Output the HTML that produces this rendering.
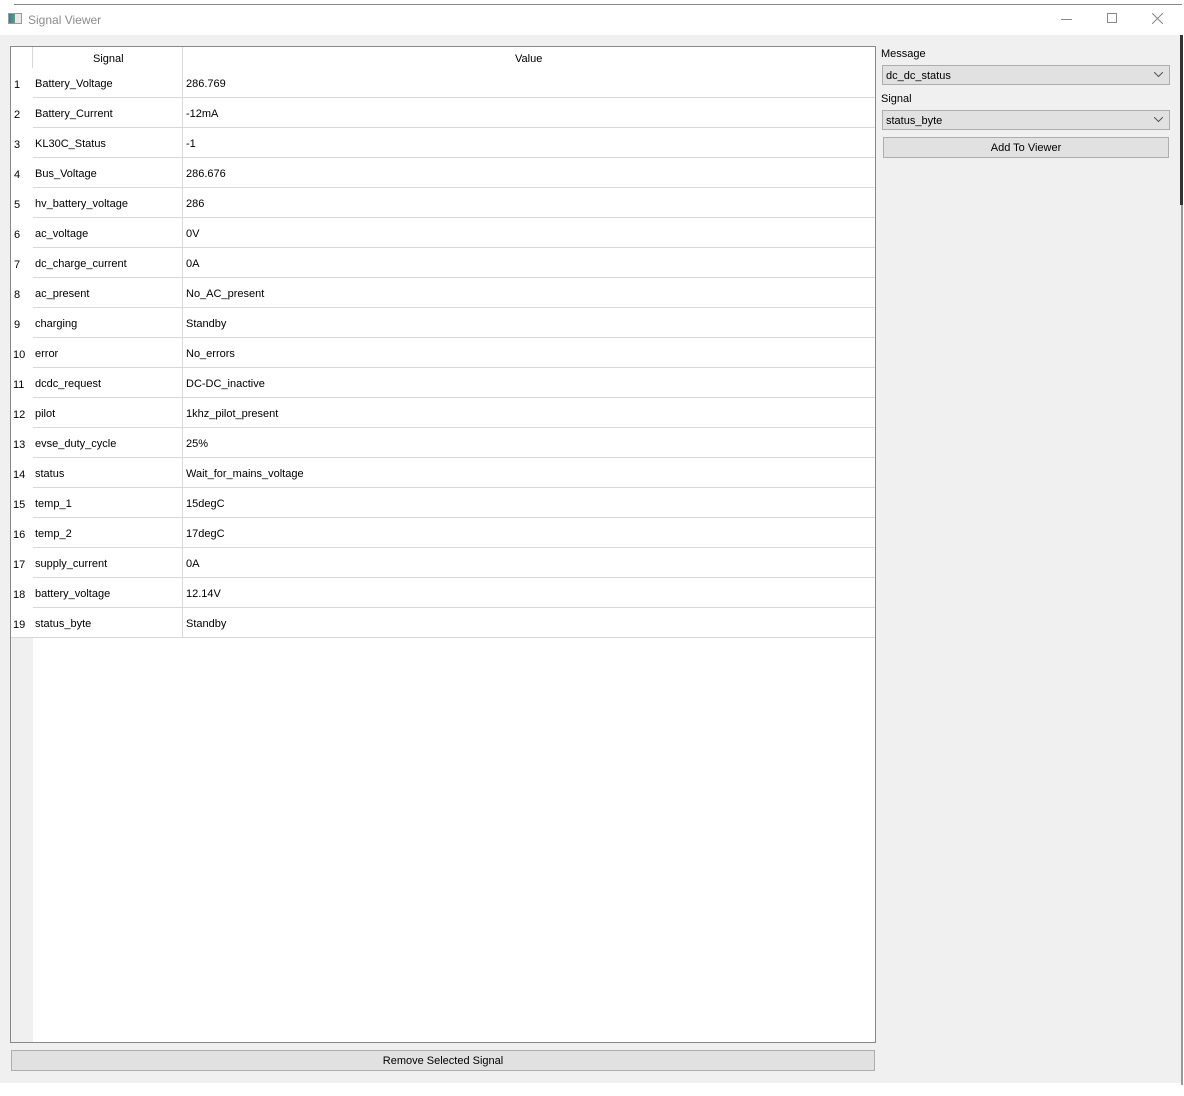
<!DOCTYPE html>
<html><head><meta charset="utf-8"><style>
*{margin:0;padding:0;box-sizing:border-box}
body{width:1184px;height:1096px;background:#fff;position:relative;overflow:hidden;font-family:"Liberation Sans",sans-serif;font-size:11px;color:#000}
.a{position:absolute}
.row{position:absolute;left:33px;width:842px;height:30px;border-bottom:1px solid #d8d8d8}
.row span{position:absolute;top:10px}
.num{position:absolute;left:14px;font-size:11px;margin-top:1px}
.combo{position:absolute;left:882px;width:288px;height:20px;background:#e1e1e1;border:1px solid #adadad;padding:4px 0 0 3px}
.combo svg{position:absolute;right:6px;top:6px}
.btn{position:absolute;background:#e1e1e1;border:1px solid #adadad;text-align:center;padding-top:4px}
</style></head><body>
<div class="a" style="left:14px;top:4px;width:1168px;height:1px;background:#8a8a8a"></div>
<div class="a" style="left:0;top:5px;width:1182px;height:30px;background:#fff"></div>
<div class="a" style="left:8px;top:13px;width:14px;height:11px;border:1px solid #9a9a9a;background:linear-gradient(90deg,#3d7a9a 0,#5aa080 50%,#e8e8e8 50%)"></div>
<div class="a" style="left:28px;top:13px;font-size:12px;color:#8c8c8c">Signal Viewer</div>
<div class="a" style="left:1061px;top:19px;width:11px;height:1px;background:#888"></div>
<div class="a" style="left:1107px;top:13px;width:10px;height:10px;border:1px solid #888"></div>
<svg class="a" style="left:1152px;top:13px" width="11" height="11"><path d="M0 0L11 11M11 0L0 11" stroke="#888" stroke-width="1"/></svg>
<div class="a" style="left:0;top:35px;width:1182px;height:1048px;background:#f0f0f0"></div>
<div class="a" style="left:1180px;top:35px;width:3px;height:170px;background:#333"></div>
<div class="a" style="left:1181px;top:205px;width:2px;height:880px;background:#999"></div>
<div class="a" style="left:10px;top:46px;width:866px;height:997px;border:1px solid #888;background:#fff"></div>
<div class="a" style="left:11px;top:637px;width:22px;height:405px;background:#f0f0f0"></div>
<div class="a" style="left:32px;top:47px;width:1px;height:21px;background:#d8d8d8"></div>
<div class="a" style="left:182px;top:47px;width:1px;height:590px;background:#d8d8d8"></div>
<div class="a" style="left:93px;top:53px">Signal</div>
<div class="a" style="left:515px;top:53px">Value</div>
<div class="row" style="top:68px"><span style="left:2px">Battery_Voltage</span><span style="left:153px">286.769</span></div>
<div class="row" style="top:98px"><span style="left:2px">Battery_Current</span><span style="left:153px">-12mA</span></div>
<div class="row" style="top:128px"><span style="left:2px">KL30C_Status</span><span style="left:153px">-1</span></div>
<div class="row" style="top:158px"><span style="left:2px">Bus_Voltage</span><span style="left:153px">286.676</span></div>
<div class="row" style="top:188px"><span style="left:2px">hv_battery_voltage</span><span style="left:153px">286</span></div>
<div class="row" style="top:218px"><span style="left:2px">ac_voltage</span><span style="left:153px">0V</span></div>
<div class="row" style="top:248px"><span style="left:2px">dc_charge_current</span><span style="left:153px">0A</span></div>
<div class="row" style="top:278px"><span style="left:2px">ac_present</span><span style="left:153px">No_AC_present</span></div>
<div class="row" style="top:308px"><span style="left:2px">charging</span><span style="left:153px">Standby</span></div>
<div class="row" style="top:338px"><span style="left:2px">error</span><span style="left:153px">No_errors</span></div>
<div class="row" style="top:368px"><span style="left:2px">dcdc_request</span><span style="left:153px">DC-DC_inactive</span></div>
<div class="row" style="top:398px"><span style="left:2px">pilot</span><span style="left:153px">1khz_pilot_present</span></div>
<div class="row" style="top:428px"><span style="left:2px">evse_duty_cycle</span><span style="left:153px">25%</span></div>
<div class="row" style="top:458px"><span style="left:2px">status</span><span style="left:153px">Wait_for_mains_voltage</span></div>
<div class="row" style="top:488px"><span style="left:2px">temp_1</span><span style="left:153px">15degC</span></div>
<div class="row" style="top:518px"><span style="left:2px">temp_2</span><span style="left:153px">17degC</span></div>
<div class="row" style="top:548px"><span style="left:2px">supply_current</span><span style="left:153px">0A</span></div>
<div class="row" style="top:578px"><span style="left:2px">battery_voltage</span><span style="left:153px">12.14V</span></div>
<div class="row" style="top:608px"><span style="left:2px">status_byte</span><span style="left:153px">Standby</span></div>
<div class="num" style="top:78px">1</div><div class="num" style="top:108px">2</div><div class="num" style="top:138px">3</div><div class="num" style="top:168px">4</div><div class="num" style="top:198px">5</div><div class="num" style="top:228px">6</div><div class="num" style="top:258px">7</div><div class="num" style="top:288px">8</div><div class="num" style="top:318px">9</div>
<div class="num" style="top:348px;left:13px">10</div><div class="num" style="top:378px;left:13px">11</div><div class="num" style="top:408px;left:13px">12</div><div class="num" style="top:438px;left:13px">13</div><div class="num" style="top:468px;left:13px">14</div><div class="num" style="top:498px;left:13px">15</div><div class="num" style="top:528px;left:13px">16</div><div class="num" style="top:558px;left:13px">17</div><div class="num" style="top:588px;left:13px">18</div><div class="num" style="top:618px;left:13px">19</div>
<div class="a" style="left:11px;top:637px;width:864px;height:1px;background:#d8d8d8"></div>
<div class="a" style="left:881px;top:48px">Message</div>
<div class="combo" style="top:65px">dc_dc_status<svg width="9" height="6"><path d="M0 0L4.5 4.5L9 0" stroke="#555" fill="none"/></svg></div>
<div class="a" style="left:881px;top:93px">Signal</div>
<div class="combo" style="top:110px">status_byte<svg width="9" height="6"><path d="M0 0L4.5 4.5L9 0" stroke="#555" fill="none"/></svg></div>
<div class="btn" style="left:883px;top:137px;width:286px;height:21px">Add To Viewer</div>
<div class="btn" style="left:11px;top:1050px;width:864px;height:21px">Remove Selected Signal</div>
</body></html>
